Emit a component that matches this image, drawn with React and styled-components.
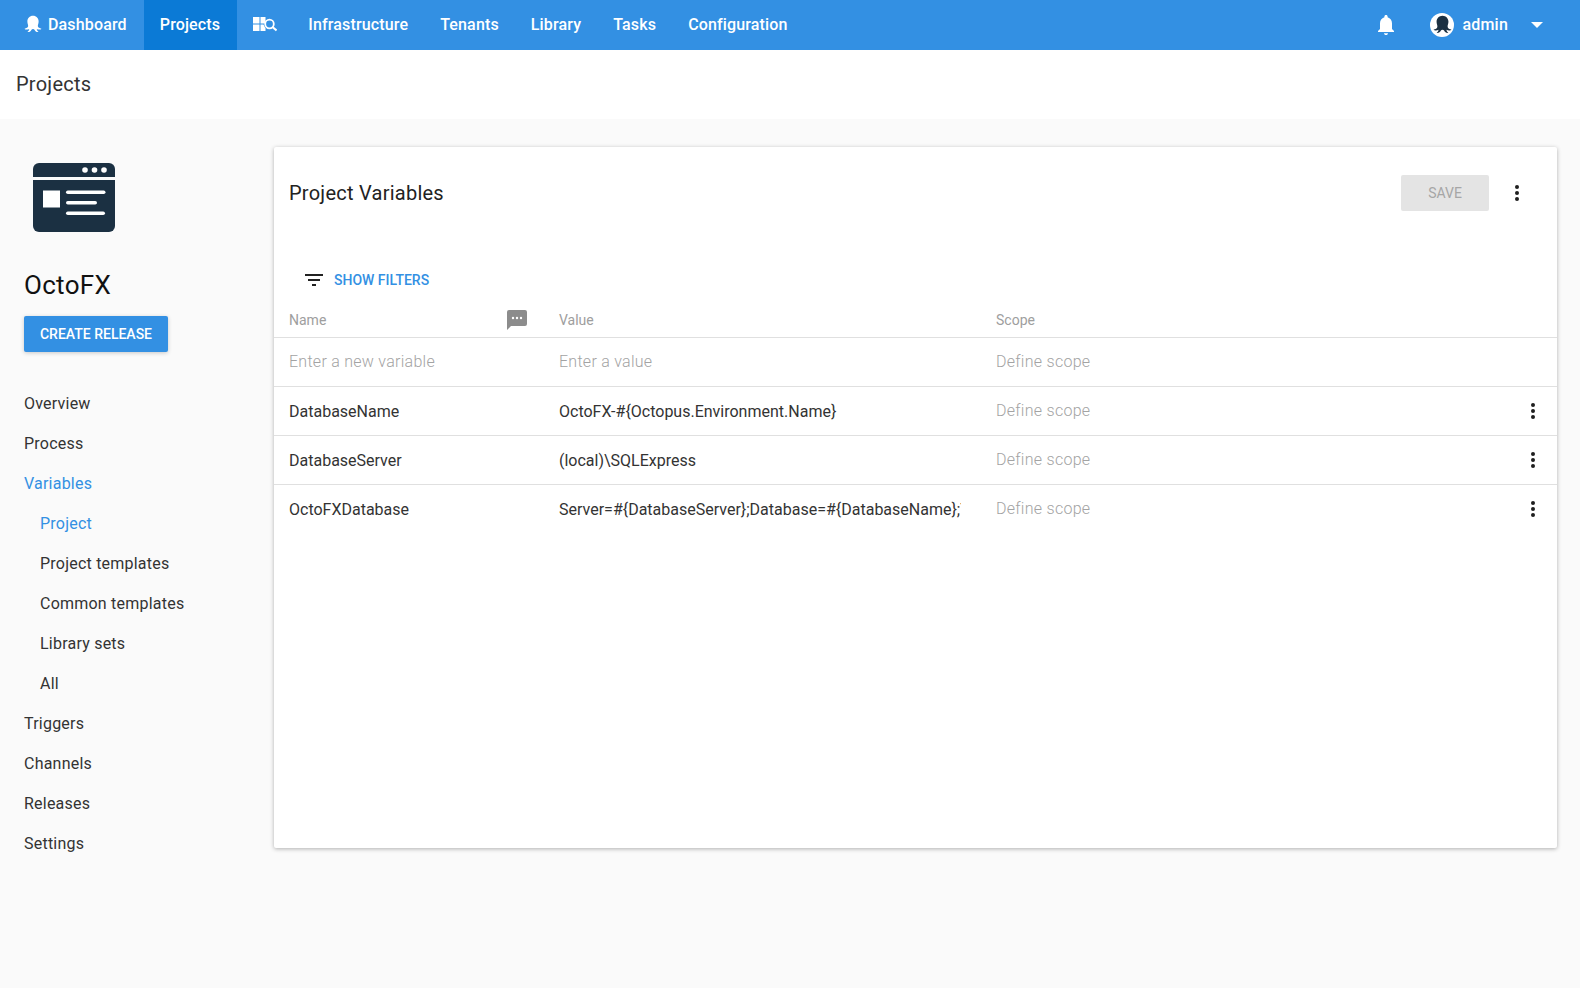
import React from 'react'
import styled, { createGlobalStyle } from 'styled-components'

const Global = createGlobalStyle`
  html, body { margin: 0; padding: 0; background: #fafafa; }
  body { font-family: Roboto, "Liberation Sans", sans-serif; font-size: 16px; color: #333; }
`

const Page = styled.div`
  width: 1580px;
  height: 988px;
  overflow: hidden;
  background: #fafafa;
`

const TopBar = styled.nav`
  height: 50px;
  background: #3390e3;
  display: flex;
  align-items: stretch;
  color: #fff;
`

const NavItem = styled.a`
  display: flex;
  align-items: center;
  gap: 6px;
  padding: ${p => p.$padding || '0 16px'};
  padding-bottom: 2px;
  font-size: 16px;
  font-weight: 500;
  letter-spacing: 0.15px;
  color: #fff;
  background: ${p => (p.$active ? '#0b7ad6' : 'transparent')};
`

const Spacer = styled.div`
  flex: 1;
`

const BellWrap = styled.div`
  display: flex;
  align-items: center;
  margin-right: 34px;
`

const UserMenu = styled.div`
  display: flex;
  align-items: center;
  font-size: 16px;
  font-weight: 500;
  letter-spacing: 0.2px;
  margin-right: 37px;
  padding-bottom: 1px;
`

const Avatar = styled.div`
  width: 24px;
  height: 24px;
  border-radius: 50%;
  background: #fff;
  display: flex;
  align-items: center;
  justify-content: center;
  margin-right: 8px;
`

const Caret = styled.div`
  width: 0;
  height: 0;
  border-left: 6px solid transparent;
  border-right: 6px solid transparent;
  border-top: 6px solid #fff;
  margin-left: 23px;
`

const PageHeader = styled.header`
  height: 69px;
  background: #fff;
  display: flex;
  align-items: center;
  padding: 0 0 2px 16px;
  box-sizing: border-box;
  font-size: 20px;
  letter-spacing: 0.25px;
  color: #333;
`

const Main = styled.div`
  display: flex;
  align-items: flex-start;
  padding-top: 28px;
`

const Sidebar = styled.aside`
  width: 274px;
  flex: none;
  padding-left: 24px;
  box-sizing: border-box;
`

const ProjectLogo = styled.div`
  height: 70px;
  margin: 16px 0 0 9px;
  display: flex;
`

const ProjectName = styled.h2`
  margin: 36px 0 0;
  font-size: 26px;
  line-height: 32px;
  font-weight: 400;
  letter-spacing: 0.3px;
  color: #111;
`

const CreateButton = styled.button`
  display: block;
  margin-top: 15px;
  width: 144px;
  height: 36px;
  border: 0;
  border-radius: 2px;
  background: #3390e3;
  color: #fff;
  font-family: inherit;
  font-size: 14px;
  font-weight: 500;
  box-shadow: 0 1px 4px rgba(0, 0, 0, 0.2);
`

const SideNav = styled.ul`
  list-style: none;
  margin: 32px 0 0;
  padding: 0;
`

const SideLink = styled.li`
  height: 40px;
  line-height: 40px;
  font-size: 16px;
  letter-spacing: 0.22px;
  padding-left: ${p => (p.$sub ? '16px' : '0')};
  color: ${p => (p.$active ? '#3390e3' : '#333')};
`

const Card = styled.section`
  width: 1283px;
  height: 701px;
  flex: none;
  background: #fff;
  border-radius: 2px;
  box-shadow: 0 1px 4px rgba(0, 0, 0, 0.3);
`

const CardHeader = styled.div`
  height: 92px;
  display: flex;
  align-items: center;
  padding: 0 28px 0 15px;
`

const CardTitle = styled.h1`
  flex: 1;
  margin: 0;
  font-size: 20px;
  font-weight: 400;
  letter-spacing: 0.25px;
  color: #222;
`

const SaveButton = styled.button`
  width: 88px;
  height: 36px;
  border: 0;
  border-radius: 2px;
  background: #e4e4e4;
  color: #a6a6a6;
  font-family: inherit;
  font-size: 14px;
  font-weight: 400;
  margin-right: 16px;
`

const DotsBox = styled.div`
  width: 24px;
  height: 24px;
  display: flex;
  align-items: center;
  justify-content: center;
`

const FilterRow = styled.div`
  height: 38px;
  margin-top: 22px;
  display: flex;
  align-items: center;
  padding-left: 31px;
  gap: 11px;
  color: #3390e3;
  font-size: 14px;
  font-weight: 500;
`

const Row = styled.div`
  display: grid;
  grid-template-columns: 270px 437px 1fr 36px;
  align-items: center;
  height: 49px;
  padding-left: 15px;
  border-bottom: 1px solid #e0e0e0;
  box-sizing: border-box;
  &:last-child {
    border-bottom-color: transparent;
  }
`

const HeadRow = styled(Row)`
  height: 39px;
  padding-top: 4px;
`

const HeadCell = styled.div`
  display: flex;
  align-items: center;
  justify-content: space-between;
  font-size: 14px;
  color: #9e9e9e;
  padding-right: ${p => (p.$icon ? '32px' : '0')};
`

const Cell = styled.div`
  font-size: 16px;
  color: #333;
  white-space: nowrap;
  overflow: hidden;
  width: ${p => (p.$clip ? '402px' : 'auto')};
`

const MutedCell = styled.div`
  font-size: 16px;
  font-weight: 300;
  letter-spacing: 0.27px;
  color: #a3a3a3;
  white-space: nowrap;
  padding-bottom: 2px;
`

const Octopus = ({ size = 18, color = '#fff' }) => (
  <svg width={size} height={size} viewBox="0 0 24 24" fill={color}>
    <path d="M12 1C7.500 1 4.500 4.500 4.500 8.500C4.500 11.500 5.800 13 5.500 15C5.200 16.800 3 17.800.8 18.200C1.500 19.600 4.500 20 7 18.600C6.800 20.200 6 21.500 4.600 22.600C6.800 23.200 9 21.800 10 19.600C10.400 19 11 18.600 12 18.600C13 18.600 13.600 19 14 19.600C15 21.800 17.200 23.200 19.400 22.600C18 21.500 17.200 20.200 17 18.600C19.500 20 22.500 19.600 23.200 18.200C21 17.800 18.800 16.800 18.500 15C18.200 13 19.500 11.500 19.500 8.500C19.500 4.500 16.500 1 12 1Z" />
  </svg>
)

const LibraryIcon = () => (
  <svg width="24" height="16" viewBox="0 0 24 16" fill="#fff">
    <rect x="0" y="1" width="6.500" height="6.500" />
    <rect x="0" y="8.500" width="6.500" height="6.500" />
    <rect x="7.500" y="1" width="5" height="6.500" />
    <path d="M7.500 8.500h3l2 4v2.500h-5z" />
    <circle cx="16.500" cy="8" r="4.300" fill="none" stroke="#fff" strokeWidth="1.800" />
    <path d="M19.500 11l4 3.500" stroke="#fff" strokeWidth="2" />
  </svg>
)

const Bell = () => (
  <svg width="20" height="22" viewBox="0 0 20 22" fill="#fff">
    <path d="M10 1c-1 0-1.600.7-1.600 1.600v.6C5.600 4 4 6.400 4 9.200V15l-2 2v1h16v-1l-2-2V9.200c0-2.800-1.600-5.200-4.400-6v-.6C11.600 1.700 11 1 10 1z" />
    <path d="M8 19.200h4c0 1.100-.9 1.800-2 1.800s-2-.7-2-1.800z" />
  </svg>
)

const Dots = ({ color = '#1f1f1f' }) => (
  <svg width="6" height="18" viewBox="0 0 6 18" fill={color}>
    <circle cx="3" cy="3" r="2" />
    <circle cx="3" cy="9" r="2" />
    <circle cx="3" cy="15" r="2" />
  </svg>
)

const WebAppIcon = () => (
  <svg width="82" height="69" viewBox="0 0 82 69">
    <path d="M0 14V6a6 6 0 0 1 6-6h70a6 6 0 0 1 6 6v8z" fill="#1b3042" />
    <path d="M0 17h82v46a6 6 0 0 1-6 6H6a6 6 0 0 1-6-6z" fill="#1b3042" />
    <circle cx="52" cy="7" r="2.800" fill="#fff" />
    <circle cx="61.500" cy="7" r="2.800" fill="#fff" />
    <circle cx="71" cy="7" r="2.800" fill="#fff" />
    <rect x="10" y="27.500" width="17" height="17" fill="#fff" />
    <rect x="33" y="27.500" width="39.500" height="3.600" rx="1.800" fill="#fff" />
    <rect x="33" y="38" width="31" height="3.600" rx="1.800" fill="#fff" />
    <rect x="33" y="48.500" width="39" height="3.600" rx="1.800" fill="#fff" />
  </svg>
)

const FilterIcon = () => (
  <svg width="18" height="12" viewBox="0 0 18 12" fill="#222">
    <rect x="0" y="0" width="18" height="2" />
    <rect x="3" y="5" width="12" height="2" />
    <rect x="7" y="10" width="4" height="2" />
  </svg>
)

const CommentIcon = () => (
  <svg width="20" height="20" viewBox="0 0 20 20">
    <path d="M2 0h16a2 2 0 0 1 2 2v12a2 2 0 0 1-2 2H4l-4 4V2a2 2 0 0 1 2-2z" fill="#8c8c8c" />
    <circle cx="6" cy="8" r="1.200" fill="#fff" />
    <circle cx="10" cy="8" r="1.200" fill="#fff" />
    <circle cx="14" cy="8" r="1.200" fill="#fff" />
  </svg>
)

const sideItems = [
  { label: 'Overview' },
  { label: 'Process' },
  { label: 'Variables', active: true },
  { label: 'Project', active: true, sub: true },
  { label: 'Project templates', sub: true },
  { label: 'Common templates', sub: true },
  { label: 'Library sets', sub: true },
  { label: 'All', sub: true },
  { label: 'Triggers' },
  { label: 'Channels' },
  { label: 'Releases' },
  { label: 'Settings' },
]

const variables = [
  { name: 'DatabaseName', value: 'OctoFX-#{Octopus.Environment.Name}' },
  { name: 'DatabaseServer', value: '(local)\\SQLExpress' },
  {
    name: 'OctoFXDatabase',
    value: 'Server=#{DatabaseServer};Database=#{DatabaseName};T',
    clip: true,
  },
]

function App() {
  return (
    <Page>
      <Global />
      <TopBar>
        <NavItem $padding="0 17px 0 24px">
          <Octopus />
          Dashboard
        </NavItem>
        <NavItem $active $padding="0 17px 0 16px">Projects</NavItem>
        <NavItem $padding="0 15px 0 16px">
          <LibraryIcon />
        </NavItem>
        <NavItem>Infrastructure</NavItem>
        <NavItem>Tenants</NavItem>
        <NavItem>Library</NavItem>
        <NavItem>Tasks</NavItem>
        <NavItem>Configuration</NavItem>
        <Spacer />
        <BellWrap>
          <Bell />
        </BellWrap>
        <UserMenu>
          <Avatar>
            <Octopus size={19} color="#1b3042" />
          </Avatar>
          admin
          <Caret />
        </UserMenu>
      </TopBar>
      <PageHeader>Projects</PageHeader>
      <Main>
        <Sidebar>
          <ProjectLogo>
            <WebAppIcon />
          </ProjectLogo>
          <ProjectName>OctoFX</ProjectName>
          <CreateButton>CREATE RELEASE</CreateButton>
          <SideNav>
            {sideItems.map(item => (
              <SideLink key={item.label} $active={item.active} $sub={item.sub}>
                {item.label}
              </SideLink>
            ))}
          </SideNav>
        </Sidebar>
        <Card>
          <CardHeader>
            <CardTitle>Project Variables</CardTitle>
            <SaveButton disabled>SAVE</SaveButton>
            <DotsBox>
              <Dots />
            </DotsBox>
          </CardHeader>
          <FilterRow>
            <FilterIcon />
            SHOW FILTERS
          </FilterRow>
          <HeadRow>
            <HeadCell $icon>
              Name
              <CommentIcon />
            </HeadCell>
            <HeadCell>Value</HeadCell>
            <HeadCell>Scope</HeadCell>
          </HeadRow>
          <Row>
            <MutedCell>Enter a new variable</MutedCell>
            <MutedCell>Enter a value</MutedCell>
            <MutedCell>Define scope</MutedCell>
          </Row>
          {variables.map(v => (
            <Row key={v.name}>
              <Cell>{v.name}</Cell>
              <Cell $clip={v.clip}>{v.value}</Cell>
              <MutedCell>Define scope</MutedCell>
              <DotsBox>
                <Dots />
              </DotsBox>
            </Row>
          ))}
        </Card>
      </Main>
    </Page>
  )
}

export default App
